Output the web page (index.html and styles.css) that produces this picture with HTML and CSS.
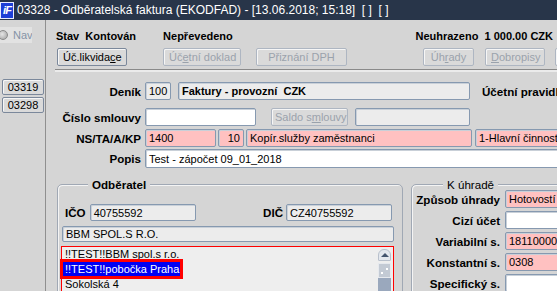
FILE: index.html
```html
<!DOCTYPE html>
<html lang="cs">
<head>
<meta charset="utf-8">
<title>03328 - Odběratelská faktura</title>
<link rel="stylesheet" href="styles.css">
</head>
<body>
<div class="titlebar">
  <span class="logo">iF</span>
  <span class="title">03328 - Odběratelská faktura (EKODFAD) - [13.06.2018; 15:18]&nbsp; [ ]&nbsp; [ ]</span>
</div>
<div class="window">
  <aside class="sidebar">
    <div class="nav"><span class="radio"></span><span class="nav-label">Nav</span></div>
    <button class="btn side-btn first">03319</button>
    <button class="btn side-btn">03298</button>
  </aside>
  <main class="main">
    <div class="status">
      <span class="st-stav">Stav&nbsp; Kontován</span>
      <span class="st-prev">Nepřevedeno</span>
      <span class="st-uhr">Neuhrazeno&nbsp; 1 000.00 CZK</span>
    </div>
    <div class="toolbar">
      <button class="btn b-likv">Úč.likvida<u>c</u>e</button>
      <button class="btn dis b-dokl">Úč<u>e</u>tní doklad</button>
      <button class="btn dis b-dph">Přiznání DPH</button>
      <button class="btn dis b-uhr">Úh<u>r</u>ady</button>
      <button class="btn dis b-dobr"><u>D</u>obropisy</button>
      <button class="btn dis b-more">&nbsp;</button>
    </div>
    <div class="sep"></div>
    <div class="form">
      <div class="row r-denik">
        <span class="lbl">Deník</span>
        <div class="inp ro w-denik">100</div>
        <div class="inp ro bold w-fakt">Faktury - provozní&nbsp; CZK</div>
        <span class="lbl-free">Účetní pravidla</span>
      </div>
      <div class="row r-smlouva">
        <span class="lbl">Číslo smlouvy</span>
        <div class="inp wh w-smlouva"></div>
        <button class="btn dis b-saldo">Saldo s<u>m</u>louvy</button>
        <div class="inp ro w-saldo"></div>
      </div>
      <div class="row r-ns">
        <span class="lbl">NS/TA/A/KP</span>
        <div class="inp pk w-ns">1400</div>
        <div class="inp pk w-ta right">10</div>
        <div class="inp pk w-a">Kopír.služby zaměstnanci</div>
        <div class="inp pk w-kp">1-Hlavní činnost</div>
      </div>
      <div class="row r-popis">
        <span class="lbl">Popis</span>
        <div class="inp wh w-popis">Test - zápočet 09_01_2018</div>
      </div>
    </div>
    <div class="groups">
      <fieldset class="grp odb">
        <legend class="bold">Odběratel</legend>
        <div class="ico-row">
          <span class="lbl-in">IČO</span>
          <div class="inp ro w-ico">40755592</div>
          <span class="lbl-in dic">DIČ</span>
          <div class="inp ro w-ico">CZ40755592</div>
        </div>
        <div class="inp ro w-name">BBM SPOL.S R.O.</div>
        <div class="list">
          <div class="items">
            <div class="item">!!TEST!!BBM spol.s r.o.</div>
            <div class="item"><span class="sel">!!TEST!!pobočka Praha</span></div>
            <div class="item">Sokolská 4</div>
          </div>
          <div class="scroll">
            <div class="sb-up"><span class="tri"></span></div>
            <div class="sb-thumb"><span class="dot d1"></span><span class="dot d2"></span></div>
            <div class="sb-track"></div>
          </div>
        </div>
      </fieldset>
      <fieldset class="grp uhr">
        <legend>K úhradě</legend>
        <div class="urow first"><span class="ulbl">Způsob úhrady</span><div class="inp pk w-u">Hotovostí</div></div>
        <div class="urow"><span class="ulbl">Cizí účet</span><div class="inp wh w-u"></div></div>
        <div class="urow"><span class="ulbl">Variabilní s.</span><div class="inp pk w-u">1811000000</div></div>
        <div class="urow"><span class="ulbl">Konstantní s.</span><div class="inp pk w-u">0308</div></div>
        <div class="urow"><span class="ulbl">Specifický s.</span><div class="inp wh w-u"></div></div>
      </fieldset>
    </div>
  </main>
</div>
</body>
</html>
```
FILE: styles.css
```css
* { box-sizing: border-box; }
html, body { margin: 0; padding: 0; }
body {
  width: 557px;
  height: 291px;
  overflow: hidden;
  background: #d5d5d5;
  font: 11px "Liberation Sans", Arial, sans-serif;
  color: #000;
}
.bold { font-weight: bold; }

.titlebar {
  height: 20px;
  background: #283549;
  color: #fff;
  display: flex;
  align-items: center;
  white-space: nowrap;
}
.logo {
  width: 14px;
  height: 17px;
  margin-right: 3px;
  background: #1d3fd6;
  border: 1px solid #e8ecff;
  color: #fff;
  font: italic bold 11px "Liberation Sans", Arial, sans-serif;
  display: flex;
  align-items: center;
  justify-content: center;
  letter-spacing: -1px;
}
.title { font-size: 12px; }

.window { display: flex; height: 271px; }

.sidebar {
  width: 46px;
  flex-shrink: 0;
  border-right: 1px solid #8f8f8f;
  display: flex;
  flex-direction: column;
  align-items: flex-start;
}
.nav {
  margin-top: 7px;
  width: 32px;
  height: 16px;
  background: #e2e2e2;
  display: flex;
  align-items: center;
  overflow: hidden;
}
.radio {
  width: 10px;
  height: 10px;
  margin-left: -2px;
  border-radius: 50%;
  border: 1px solid #8a8a8a;
  background: radial-gradient(circle at 40% 40%, #e6e6e6 0, #b4b4b4 70%);
  flex-shrink: 0;
}
.nav-label { margin-left: 5px; color: #8593a6; }

.btn {
  height: 18px;
  padding: 0 5px;
  font: 11px "Liberation Sans", Arial, sans-serif;
  color: #000;
  background: #dadada;
  border: 1px solid #7b889b;
  border-radius: 2px;
  box-shadow: inset 1px 1px 0 #f6f6f6;
  white-space: nowrap;
  flex-shrink: 0;
}
.btn.dis { color: #9aa2ac; border-color: #aeb6c2; }
.side-btn { width: 42px; height: 16px; margin-left: 2px; padding: 0; }
.side-btn.first { margin-top: 36px; }
.side-btn + .side-btn { margin-top: 2px; }

.main {
  flex: 1;
  min-width: 0;
  overflow: hidden;
  padding-left: 10px;
}
.status {
  margin-top: 10px;
  height: 13px;
  line-height: 13px;
  display: flex;
  font-weight: bold;
  white-space: nowrap;
}
.st-prev { margin-left: 27px; }
.st-uhr { margin-left: auto; margin-right: 4px; }

.toolbar { margin-top: 5px; display: flex; }
.b-likv { margin-left: 1px; width: 70px; }
.b-dokl { margin-left: 36px; width: 78px; }
.b-dph { margin-left: 15px; width: 91px; }
.b-uhr { margin-left: 76px; width: 51px; }
.b-dobr { margin-left: 11px; width: 60px; }
.b-more { margin-left: 10px; width: 40px; }

.sep {
  margin-top: 3px;
  margin-left: -1px;
  height: 3px;
  border-top: 1px solid #8a8a8a;
  border-bottom: 2px solid #ebebeb;
}

.row { display: flex; align-items: center; white-space: nowrap; }
.r-denik { margin-top: 10px; }
.r-smlouva { margin-top: 8px; }
.r-ns { margin-top: 3px; }
.r-popis { margin-top: 2px; }
.lbl {
  width: 85px;
  margin-right: 4px;
  text-align: right;
  font-weight: bold;
  font-size: 11.6px;
  flex-shrink: 0;
}
.lbl-free { margin-left: 12px; font-weight: bold; font-size: 11.6px; }

.inp {
  height: 18px;
  padding: 0 3px;
  display: flex;
  align-items: center;
  border: 1px solid #8699b0;
  border-radius: 2px;
  box-shadow: inset 1px 1px 0 #c9d0d8;
  white-space: nowrap;
  overflow: hidden;
  flex-shrink: 0;
}
.inp.ro { background: #ececec; }
.inp.wh { background: #ffffff; }
.inp.pk { background: #ffc1c1; }
.inp.right { justify-content: flex-end; }

.w-denik { width: 26px; }
.w-fakt { width: 292px; margin-left: 7px; }
.w-smlouva { width: 111px; }
.b-saldo { margin-left: 15px; width: 77px; padding: 0 3px; }
.w-saldo { width: 115px; margin-left: 7px; }
.w-ns { width: 71px; }
.w-ta { width: 26px; margin-left: 2px; }
.w-a { width: 226px; margin-left: 2px; }
.w-kp { width: 100px; margin-left: 3px; }
.w-popis { width: 430px; height: 19px; }

.groups { display: flex; margin-top: 10px; }
.grp {
  margin: 0;
  padding: 0;
  min-width: 0;
  height: 130px;
  flex-shrink: 0;
  border: 1px solid #a0a8b4;
  border-radius: 5px;
  box-shadow: inset 1px 1px 0 #f4f4f4;
}
.grp legend {
  padding: 0 4px;
  line-height: 13px;
  font-size: 11.6px;
  background: #d5d5d5;
}
.odb { width: 346px; margin-left: 1px; padding: 0 10px 0 4px; }
.odb legend { margin-left: 26px; }
.uhr { width: 160px; margin-left: 8px; }
.uhr legend { margin-left: 31px; }

.ico-row { display: flex; align-items: center; margin-top: 13px; }
.ico-row .inp { height: 17px; }
.lbl-in { font-weight: bold; font-size: 11.6px; margin-left: 3px; margin-right: 4px; }
.dic { margin-left: auto; margin-right: 3px; }
.w-ico { width: 106px; }
.w-name { width: 332px; height: 16px; margin-top: 5px; }

.list {
  margin-top: 4px;
  margin-left: -1px;
  width: 333px;
  height: 60px;
  border: 1px solid #ff0000;
  background: #eeeeee;
  display: flex;
}
.items { flex: 1; padding-top: 0; padding-left: 1px; }
.item { height: 15px; line-height: 15px; padding-left: 2px; white-space: nowrap; }
.sel {
  display: inline-block;
  margin-left: -2px;
  padding: 0 1px 0 2px;
  line-height: 14px;
  background: #0000f4;
  color: #fff;
  outline: 3px solid #ff0000;
}
.scroll {
  width: 13px;
  margin: 2px 2px 0 0;
  display: flex;
  flex-direction: column;
}
.sb-up {
  height: 12px;
  border: 1px solid #b8c0cc;
  border-radius: 6px 6px 1px 1px;
  background: #e4e8ee;
  display: flex;
  align-items: center;
  justify-content: center;
}
.tri {
  width: 0;
  height: 0;
  border-left: 4px solid transparent;
  border-right: 4px solid transparent;
  border-bottom: 4px solid #44556e;
}
.sb-thumb {
  height: 15px;
  margin-top: 2px;
  background: #c3cad4;
  border: 1px solid #e6e9ee;
  position: relative;
}
.dot { position: absolute; width: 2px; height: 2px; background: #fff; }
.d1 { left: 2px; top: 8px; }
.d2 { left: 7px; top: 4px; }
.sb-track { flex: 1; background: #9aa8bd; }

.urow { display: flex; align-items: center; margin-top: 3px; white-space: nowrap; }
.urow.first { margin-top: -1px; }
.ulbl { width: 88px; margin-right: 5px; text-align: right; font-weight: bold; font-size: 11.6px; flex-shrink: 0; }
.w-u { width: 70px; }
```
